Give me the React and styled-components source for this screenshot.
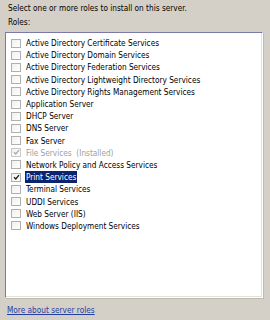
import React from 'react'
import styled, { createGlobalStyle } from 'styled-components'

const Global = createGlobalStyle`
  html, body {
    margin: 0;
    padding: 0;
    background: #d4d0c8;
  }
  body {
    width: 270px;
    height: 320px;
    overflow: hidden;
    font-family: "DejaVu Sans Condensed", "DejaVu Sans", sans-serif;
    font-stretch: semi-condensed;
  }
`

const Page = styled.div`
  width: 270px;
  height: 320px;
  box-sizing: border-box;
  padding: 2px 7px 0 5px;
  display: flex;
  flex-direction: column;
  color: #000;
  font-size: 8.2px;
`

const Intro = styled.div`
  padding-left: 3px;
  height: 12px;
  line-height: 12px;
`

const Label = styled.div`
  padding-left: 3px;
  margin-top: 2px;
  height: 12px;
  line-height: 12px;
`

const ListBox = styled.div`
  margin-top: 4px;
  height: 266px;
  box-sizing: border-box;
  background: #fff;
  border-style: solid;
  border-width: 1px;
  border-color: #7a7aa6 #ffffff #ffffff #7a7aa6;
  box-shadow: inset -1px -1px 0 #e2e0da, 1px 1px 0 #bdbab2;
  padding: 4px 0 0 5px;
`

const Row = styled.div`
  display: flex;
  align-items: center;
  height: 12.2px;
  gap: 4px;
  color: ${p => (p.disabled ? '#a0a0a0' : '#000')};
`

const Box = styled.span`
  width: 10px;
  height: 9px;
  box-sizing: border-box;
  border: 1px solid ${p => (p.disabled ? '#c8c8c8' : '#b0b0b0')};
  background: linear-gradient(135deg, #f0f0ee, #ffffff);
  display: flex;
  align-items: center;
  justify-content: center;
  flex-shrink: 0;
`

const Text = styled.span`
  padding: 0 1px;
  line-height: 12px;
  white-space: pre;
  background: ${p => (p.selected ? '#0c2470' : 'transparent')};
  color: ${p => (p.selected ? '#fff' : 'inherit')};
`

const MoreLink = styled.a`
  margin-top: 7px;
  padding-left: 2px;
  color: #23409e;
  text-decoration: underline;
`

const roles = [
  { name: 'Active Directory Certificate Services' },
  { name: 'Active Directory Domain Services' },
  { name: 'Active Directory Federation Services' },
  { name: 'Active Directory Lightweight Directory Services' },
  { name: 'Active Directory Rights Management Services' },
  { name: 'Application Server' },
  { name: 'DHCP Server' },
  { name: 'DNS Server' },
  { name: 'Fax Server' },
  { name: 'File Services  (Installed)', checked: true, disabled: true },
  { name: 'Network Policy and Access Services' },
  { name: 'Print Services', checked: true, selected: true },
  { name: 'Terminal Services' },
  { name: 'UDDI Services' },
  { name: 'Web Server (IIS)' },
  { name: 'Windows Deployment Services' },
]

function Check({ disabled }) {
  return (
    <svg width="7" height="7" viewBox="0 0 7 7">
      <path d="M1 3.2 L2.8 5 L6 1.2" fill="none" stroke={disabled ? '#a8a8a8' : '#1a1a1a'} strokeWidth="1.3" />
    </svg>
  )
}

export default function App() {
  return (
    <>
      <Global />
      <Page>
        <Intro>Select one or more roles to install on this server.</Intro>
        <Label>Roles:</Label>
        <ListBox>
          {roles.map(r => (
            <Row key={r.name} disabled={r.disabled}>
              <Box disabled={r.disabled}>{r.checked && <Check disabled={r.disabled} />}</Box>
              <Text selected={r.selected}>{r.name}</Text>
            </Row>
          ))}
        </ListBox>
        <MoreLink href="#">More about server roles</MoreLink>
      </Page>
    </>
  )
}
